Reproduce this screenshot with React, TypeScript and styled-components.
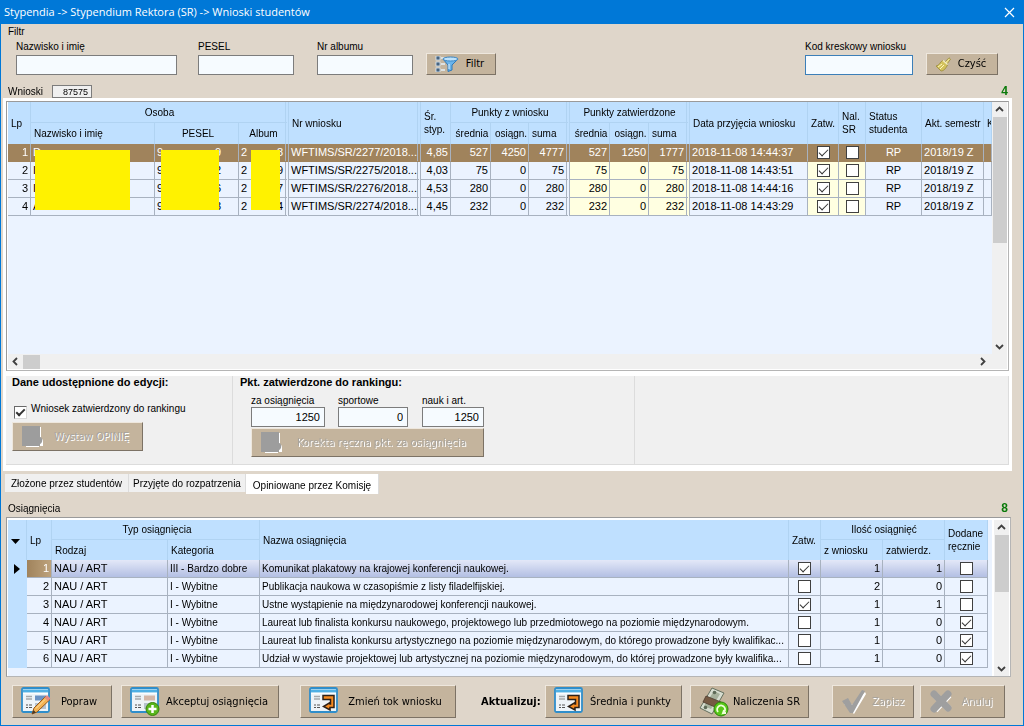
import React from 'react';
import styled, { createGlobalStyle, css } from 'styled-components';

const c = {
  title: '#0078d7',
  page: '#dfd6ca',
  button: '#c4b49d',
  head: '#bfe0ff',
  headLine: '#b0d3f2',
  row: '#ebf3ff',
  line: '#a8b2c0',
  picked: '#a0835c',
  cream: '#ffffe1',
  grey: '#f0f0f0',
  green: '#0a7a0a',
};

const Global = createGlobalStyle`
  *, *::before, *::after { box-sizing: border-box; }
  body { margin: 0; background: ${c.page}; }
  body, button, input { font: 10px/13px "Liberation Sans", Arial, sans-serif; color: #000; }
`;

const Window = styled.div`
  min-height: 100vh;
  display: flex;
  flex-direction: column;
  border: 1px solid ${c.title};
  border-top: 0;
  background: ${c.page};
`;

const TitleBar = styled.header`
  height: 24px;
  flex: none;
  display: flex;
  align-items: center;
  justify-content: space-between;
  padding: 0 8px 0 3px;
  background: ${c.title};
  color: #fff;
`;

const Title = styled.h1`
  margin: 0;
  font: 400 11px/16px "Open Sans", "Noto Sans", sans-serif;
`;

const CloseButton = styled.button`
  display: flex;
  padding: 0;
  border: 0;
  background: none;
`;

const FilterBox = styled.fieldset`
  min-width: 0;
  margin: 0;
  padding: 2px 25px 0 15px;
  border: 0;
`;

const Legend = styled.legend`
  margin-left: -8px;
  padding: 1px 0 0;
`;

const FilterRow = styled.div`
  display: flex;
  align-items: flex-end;
`;

const Field = styled.label<{ $width: number; $after?: number; $push?: boolean }>`
  display: flex;
  flex-direction: column;
  gap: 2px;
  width: ${(p) => p.$width}px;
  margin-right: ${(p) => p.$after ?? 0}px;
  ${(p) => p.$push && 'margin-left: auto;'}
  white-space: nowrap;
`;

const TextBox = styled.input<{ $active?: boolean; $number?: boolean }>`
  width: 100%;
  height: 20px;
  padding: 1px 4px 2px;
  border: 1px solid ${(p) => (p.$active ? '#3c7fb8' : '#7c7c7c')};
  border-radius: 0;
  background: #f6fbff;
  font-size: 11px;
  outline: none;
  ${(p) => p.$number && 'text-align: right;'}
`;

const Button = styled.button<{ $width: number; $height: number; $after?: number; $push?: boolean }>`
  flex: none;
  display: flex;
  align-items: center;
  width: ${(p) => p.$width}px;
  height: ${(p) => p.$height}px;
  margin-right: ${(p) => p.$after ?? 0}px;
  ${(p) => p.$push && 'margin-left: auto;'}
  padding: 0 4px 0 8px;
  border: 1px solid;
  border-color: #eee7dd #7c7265 #7c7265 #eee7dd;
  border-radius: 0;
  background: ${c.button};
  font: 400 11px/16px "DejaVu Sans Condensed", "DejaVu Sans", sans-serif;
  white-space: nowrap;
  &:disabled {
    color: #a8a49d;
    text-shadow: 1px 1px 0 #fff;
  }
  svg { flex: none; }
`;

const Caption = styled.span`
  flex: 1;
  text-align: center;
`;

const CountRow = styled.div<{ $top: number }>`
  display: flex;
  align-items: center;
  justify-content: space-between;
  height: 13px;
  margin: ${(p) => p.$top}px 15px 0 7px;
`;

const CountLabel = styled.label`
  display: flex;
  align-items: center;
  gap: 9px;
`;

const CodeBox = styled.input`
  width: 40px;
  height: 13px;
  padding: 0 3px;
  border: 1px solid #7c7c7c;
  background: ${c.grey};
  font-size: 9px;
  line-height: 11px;
  text-align: right;
`;

const Count = styled.strong`
  font-size: 12px;
  color: ${c.green};
`;

const Sheet = styled.main`
  flex: 1;
  display: flex;
  flex-direction: column;
  margin: 0 11px 0 2px;
  padding: 3px 3px 6px;
  background: #fff;
`;

const Frame = styled.div<{ $grow?: boolean }>`
  display: grid;
  grid-template-columns: minmax(0, 1fr) 15px;
  border: 1px solid #9a9a9a;
  border-color: #9a9a9a #b5b5b5 #b5b5b5 #9a9a9a;
  background: #fff;
  ${(p) =>
    p.$grow
      ? css`
          flex: 1;
          grid-template-rows: minmax(252px, 1fr) 15px;
          padding: 0 1px 1px;
        `
      : css`
          margin: 2px 12px 0 5px;
          padding: 2px 1px 0;
        `}
`;

const GridArea = styled.div<{ $pad?: boolean }>`
  overflow: hidden;
  background: ${c.row};
  ${(p) => p.$pad && 'margin-right: 2px; padding: 0 4px 8px 0;'}
`;

const Table = styled.table`
  width: 100%;
  table-layout: fixed;
  border-collapse: separate;
  border-spacing: 0;
`;

const Col = styled.col<{ $width?: number }>`
  width: ${(p) => (p.$width ? `${p.$width}px` : 'auto')};
`;

const Th = styled.th<{ $center?: boolean; $double?: boolean; $wrap?: boolean; $row?: number; $bare?: boolean }>`
  height: ${(p) => p.$row ?? 21}px;
  padding: 0 0 0 3px;
  overflow: hidden;
  background: ${c.head};
  border-right: ${(p) => (p.$double ? '4px double' : '1px solid')} ${c.headLine};
  border-bottom: ${(p) => (p.$bare ? '1px solid ' + c.headLine : '0')};
  font-weight: 400;
  text-align: ${(p) => (p.$center ? 'center' : 'left')};
  vertical-align: middle;
  white-space: ${(p) => (p.$wrap ? 'normal' : 'nowrap')};
`;

const Td = styled.td<{ $align?: 'right' | 'center'; $double?: boolean; $cream?: boolean; $mark?: boolean; $prose?: boolean; $tight?: boolean }>`
  position: relative;
  height: 18px;
  padding: 0 ${(p) => (p.$tight ? 0 : 2)}px 0 2px;
  overflow: hidden;
  text-overflow: ellipsis;
  white-space: nowrap;
  font-size: ${(p) => (p.$prose ? 10 : 11)}px;
  text-align: ${(p) => p.$align ?? 'left'};
  background: ${(p) => (p.$mark ? c.head : p.$cream ? c.cream : c.row)};
  border-right: ${(p) => (p.$double ? '4px double' : '1px solid')} ${c.line};
  border-bottom: 1px solid ${c.line};
  ${(p) => p.$mark && `border-color: ${c.head}; text-align: center; padding: 0;`}
  svg { display: block; margin: 0 auto; }
`;

const HiddenCell = styled(Td)`
  overflow: visible;
`;

const Row = styled.tr<{ $picked?: boolean; $current?: boolean }>`
  ${(p) =>
    p.$picked &&
    css`
      ${Td} {
        background: ${c.picked};
        border-bottom-color: ${c.picked};
        color: #fff;
      }
    `}
  ${(p) =>
    p.$current &&
    css`
      ${Td}:not(:first-child) {
        background: linear-gradient(#e3e8f8, #b3bfe3);
      }
      ${Td}:nth-child(2) {
        background: linear-gradient(90deg, #a0835c, #bda27c);
        color: #fff;
      }
    `}
`;

const Ends = styled.span<{ $inset?: number }>`
  display: flex;
  justify-content: space-between;
  padding-right: ${(p) => p.$inset ?? 0}px;
`;

const Mask = styled.span<{ $left: number; $right: number }>`
  position: absolute;
  z-index: 1;
  top: 6px;
  left: ${(p) => p.$left}px;
  right: ${(p) => p.$right}px;
  height: 60px;
  background: #fff200;
`;

const Tick = styled.input.attrs({ type: 'checkbox' })<{ $bold?: boolean }>`
  appearance: none;
  position: relative;
  display: block;
  flex: none;
  width: 13px;
  height: 13px;
  margin: 0 auto;
  border: 1px solid #404040;
  background: #fff;
  &:checked::after {
    content: '';
    position: absolute;
    top: 2px;
    left: 1px;
    width: 9px;
    height: 5px;
    border: solid #333;
    border-width: 0 0 ${(p) => (p.$bold ? '2px 2px' : '1px 1px')};
    transform: rotate(-45deg);
  }
`;

const VScroll = styled.div`
  display: flex;
  flex-direction: column;
  align-items: center;
  background: ${c.grey};
`;

const HScroll = styled.div`
  display: flex;
  align-items: center;
  background: ${c.grey};
`;

const Corner = styled.div`
  background: ${c.grey};
`;

const Arrow = styled.button<{ $end?: boolean }>`
  display: flex;
  align-items: center;
  justify-content: center;
  width: 15px;
  height: 15px;
  padding: 0;
  border: 0;
  background: none;
  ${(p) => p.$end && 'margin: auto 0 0;'}
`;

const SideArrow = styled(Arrow)`
  ${(p) => p.$end && 'margin: 0 2px 0 auto;'}
`;

const Thumb = styled.div<{ $w: number; $h: number }>`
  width: ${(p) => p.$w}px;
  height: ${(p) => p.$h}px;
  background: #cdcdcd;
`;

const Groups = styled.div`
  display: grid;
  grid-template-columns: 227px 402px 1fr;
  margin-top: 5px;
  background: ${c.grey};
  border-bottom: 1px solid #dcdcdc;
  min-height: 89px;
`;

const Group = styled.section<{ $left?: number }>`
  padding: 0 0 7px ${(p) => p.$left ?? 6}px;
  border-right: 1px solid #dcdcdc;
`;

const GroupTitle = styled.h2`
  margin: 0;
  font-size: 11px;
  line-height: 13px;
  white-space: nowrap;
`;

const TickLabel = styled.label`
  display: flex;
  gap: 4px;
  height: 17px;
  margin: 13px 0 3px 2px;
  ${Tick} {
    align-self: flex-end;
    margin: 0;
    border-color: #696969 #d8d8d8 #d8d8d8 #696969;
  }
`;

const Points = styled.div`
  display: flex;
  margin: 5px 0 1px 11px;
  ${Field} { gap: 0; }
`;

const Indent = styled.div`
  margin-left: 11px;
`;

const Tabs = styled.nav`
  display: flex;
  height: 20px;
  margin: 3px 0 0 4px;
`;

const Tab = styled.button<{ $on?: boolean; $width: number }>`
  width: ${(p) => p.$width}px;
  height: ${(p) => (p.$on ? 20 : 18)}px;
  padding: ${(p) => (p.$on ? '3px 0 0' : '0')};
  border: 0;
  border-right: 1px solid #dcdcdc;
  background: ${(p) => (p.$on ? '#fff' : c.grey)};
  white-space: nowrap;
`;

const Actions = styled.footer`
  display: flex;
  align-items: center;
  padding: 8px 18px 7px 11px;
`;

const UpdateLabel = styled.strong`
  flex: none;
  width: 64px;
  white-space: nowrap;
  font: 700 11px/16px "DejaVu Sans Condensed", "DejaVu Sans", sans-serif;
`;

const arrowPaths = { up: 'M1 6 4.500 2.500 8 6', down: 'M1 3 4.500 6.500 8 3', left: 'M6 1 2.500 4.500 6 8', right: 'M3 1 6.500 4.500 3 8' };

const Chevron = ({ to }: { to: keyof typeof arrowPaths }) => (
  <svg width="9" height="9" viewBox="0 0 9 9" fill="none" stroke="#404040" strokeWidth="1.800">
    <path d={arrowPaths[to]} />
  </svg>
);

const FunnelIcon = () => (
  <svg width="24" height="16" viewBox="0 0 24 16">
    {[0, 6, 12].map((y) => (
      <g key={y}>
        <rect x="1" y={y} width="4" height="4" fill="#46637f" stroke="#dcebf7" strokeWidth=".8" />
        <path d={`M6 ${y + 2}h4`} stroke="#e6f2fb" strokeWidth="1.500" />
      </g>
    ))}
    <path d="M8 3h15l-6 6v5l-4 1.500V9z" fill="#6bb4ea" stroke="#2f78b7" />
    <ellipse cx="15.500" cy="3" rx="7.500" ry="2" fill="#bfe2fa" stroke="#3b87c5" />
    <path d="M14 8v5" stroke="#e6f5ff" />
  </svg>
);

const BrushIcon = () => (
  <svg width="16" height="15" viewBox="0 0 16 15">
    <path d="M10 5 14 .8l1.500 1.400L12 7z" fill="#e9dc8a" stroke="#958634" strokeWidth=".8" />
    <path d="M1 9c3 0 4-4 6.500-5.500l5 4.500C11 11 9 14 6 14z" fill="#d3c25c" stroke="#9a8b3b" strokeWidth=".8" />
    <path d="m3 10 4-3M5 12l4-4" stroke="#fff7bd" />
    <path d="m8 3.500 4.500 4" stroke="#f5efc0" strokeWidth="1.500" />
  </svg>
);

const FormIcon = ({ kind }: { kind: 'edit' | 'add' | 'turn' }) => (
  <svg width="30" height="29" viewBox="0 0 30 29">
    <rect x="1" y="1" width="27" height="24" rx="1.500" fill="#eef4f8" stroke="#2f8ecb" strokeWidth="1.800" />
    <path d="M2 4h25" stroke="#4fb0e4" strokeWidth="3" />
    <path d="M2 6.300h25" stroke="#fff" />
    <path d="M5 9.500h6M5 12h6" stroke="#a4a8ab" strokeWidth="1.500" />
    <path d="M5 18h2M8 18h3M5 20.500h2M8 20.500h3" stroke="#555" />
    {kind !== 'turn' && <path d="M14 8.500h11v5H14z" fill={kind === 'edit' ? '#6b93c4' : '#d4b7a7'} />}
    {kind !== 'turn' && <path d="M14 16h11v6H14z" fill="#b7c3cf" />}
    {kind === 'edit' && (
      <g>
        <path d="m11 27 2-6L25 9l4 3.500L16 25z" fill="#f4b353" stroke="#94591d" />
        <path d="m23.500 10.500 2.500-2.500 3.500 3.500-2.500 2.500z" fill="#e28a86" />
        <path d="m11 27 1.500-4 2.500 2.500z" fill="#4b3928" />
        <path d="m15 21.500 9-9" stroke="#ffe2a0" />
      </g>
    )}
    {kind === 'add' && (
      <g>
        <circle cx="22.500" cy="22" r="6.500" fill="#58b61b" stroke="#39830c" />
        <path d="M22.500 18v8M18.500 22h8" stroke="#fff" strokeWidth="2.500" />
      </g>
    )}
    {kind === 'turn' && (
      <path
        d="M14 8.500h11v12h-4v2.500L14.500 19.500 21 15.500V17h.5v-4.500H14z"
        fill="#f78b20"
        stroke="#2d2119"
        strokeWidth="1.500"
      />
    )}
  </svg>
);

const MoneyIcon = () => (
  <svg width="30" height="30" viewBox="0 0 30 30">
    <path d="m1 21 12-20 12 5-12 21z" fill="#d7ddd0" stroke="#65705f" />
    <path d="m5 19 10-15 6 3-9 15z" fill="#a6b19c" />
    <path d="m7 9 15 6-3.500 6L4 15z" fill="#765a43" stroke="#4c3b2e" strokeWidth=".8" />
    <circle cx="15.500" cy="5.500" r="1.800" fill="#5d6a57" />
    <circle cx="6.500" cy="20.500" r="1.800" fill="#5d6a57" />
    <circle cx="22" cy="22" r="7" fill="#58c819" stroke="#2d850b" />
    <path d="M19 25a4 4 0 1 1 5 1l1-3M24 26l3 0" fill="none" stroke="#efffd9" strokeWidth="1.800" />
  </svg>
);

const CheckIcon = () => (
  <svg width="26" height="24" viewBox="0 0 26 24">
    <path d="m3 14 4-3 4 4L24 2l1 2-12 20z" fill="#fff" />
    <path d="m1 11 6-3 4 7L21 0l3 1-12 22H9z" fill="#9f9f9f" />
  </svg>
);

const CrossIcon = () => (
  <svg width="25" height="24" viewBox="0 0 25 24">
    <path d="m6 5 14 14M20 5 6 20" stroke="#fff" strokeWidth="6.500" />
    <path d="m5 4 14 14M19 4 5 19" stroke="#9f9f9f" strokeWidth="7" strokeLinecap="round" />
  </svg>
);

const BlockIcon = () => (
  <svg width="24" height="24" viewBox="0 0 24 24">
    <path d="M14 2h6v11l2 2v6h-4v1H5v-2h9z" fill="#fff" />
    <path d="M1 1h18v11c3 0 3 6 0 7v2H1z" fill="#9d9d9d" />
  </svg>
);

const applications = [
  { name: 'D', pesel: ['9', '9'], album: ['2', '8'], nr: 2277, avg: '4,85', asked: [527, 4250, 4777], given: [527, 1250, 1777], time: '14:44:37' },
  { name: 'I', pesel: ['9', '2'], album: ['2', '9'], nr: 2275, avg: '4,03', asked: [75, 0, 75], given: [75, 0, 75], time: '14:43:51' },
  { name: 'I', pesel: ['9', '6'], album: ['2', '7'], nr: 2276, avg: '4,53', asked: [280, 0, 280], given: [280, 0, 280], time: '14:44:16' },
  { name: 'A', pesel: ['9', '3'], album: ['2', '4'], nr: 2274, avg: '4,45', asked: [232, 0, 232], given: [232, 0, 232], time: '14:43:29' },
];

const achievements = [
  { level: 'III - Bardzo dobre', text: 'Komunikat plakatowy na krajowej konferencji naukowej.', ok: true, asked: 1, given: 1, manual: false },
  { level: 'I - Wybitne', text: 'Publikacja naukowa w czasopiśmie z listy filadelfijskiej.', ok: false, asked: 2, given: 0, manual: false },
  { level: 'I - Wybitne', text: 'Ustne wystąpienie na międzynarodowej konferencji naukowej.', ok: true, asked: 1, given: 1, manual: false },
  { level: 'I - Wybitne', text: 'Laureat lub finalista konkursu naukowego, projektowego lub przedmiotowego na poziomie międzynarodowym.', ok: false, asked: 1, given: 0, manual: true },
  { level: 'I - Wybitne', text: 'Laureat lub finalista konkursu artystycznego na poziomie międzynarodowym, do którego prowadzone były kwalifikac...', ok: false, asked: 1, given: 0, manual: true },
  { level: 'I - Wybitne', text: 'Udział w wystawie projektowej lub artystycznej na poziomie międzynarodowym, do której prowadzone były kwalifika...', ok: false, asked: 1, given: 0, manual: true },
];

const appCols = [23, 124, 84, 50, 132, 30, 40, 38, 41, 40, 39, 41, 118, 31, 27, 56, 62];
const achCols = [19, 25, 116, 92, undefined, 32, 62, 62, 43];

const ApplicationsTable = () => (
  <Table>
    <colgroup>
      {appCols.map((w, i) => (
        <Col key={i} $width={w} />
      ))}
      <Col />
    </colgroup>
    <thead>
      <tr>
        <Th rowSpan={2}>Lp</Th>
        <Th colSpan={3} $center $double $bare>Osoba</Th>
        <Th rowSpan={2} $double>Nr wniosku</Th>
        <Th rowSpan={2} $wrap>Śr. styp.</Th>
        <Th colSpan={3} $center $double $bare>Punkty z wniosku</Th>
        <Th colSpan={3} $center $double $bare>Punkty zatwierdzone</Th>
        <Th rowSpan={2}>Data przyjęcia wniosku</Th>
        <Th rowSpan={2}>Zatw.</Th>
        <Th rowSpan={2} $wrap>Nal. SR</Th>
        <Th rowSpan={2} $wrap>Status studenta</Th>
        <Th rowSpan={2}>Akt. semestr</Th>
        <Th rowSpan={2}>K</Th>
      </tr>
      <tr>
        <Th>Nazwisko i imię</Th>
        <Th $center>PESEL</Th>
        <Th $center $double>Album</Th>
        <Th $center>średnia</Th>
        <Th $center>osiągn.</Th>
        <Th $double>suma</Th>
        <Th $center>średnia</Th>
        <Th $center>osiągn.</Th>
        <Th $double>suma</Th>
      </tr>
    </thead>
    <tbody>
      {applications.map((a, i) => (
        <Row key={a.nr} $picked={i === 0}>
          <Td $align="right">{i + 1}</Td>
          <HiddenCell>{a.name}{i === 0 && <Mask $left={4} $right={24} />}</HiddenCell>
          <HiddenCell><Ends $inset={15}><span>{a.pesel[0]}</span><span>{a.pesel[1]}</span></Ends>{i === 0 && <Mask $left={6} $right={19} />}</HiddenCell>
          <HiddenCell $double><Ends><span>{a.album[0]}</span><span>{a.album[1]}</span></Ends>{i === 0 && <Mask $left={12} $right={5} />}</HiddenCell>
          <Td $double $tight>WFTIMS/SR/{a.nr}/2018...</Td>
          <Td $align="right">{a.avg}</Td>
          {a.asked.map((n, k) => (
            <Td key={k} $align="right" $double={k === 2}>{n}</Td>
          ))}
          {a.given.map((n, k) => (
            <Td key={k} $align="right" $cream $double={k === 2}>{n}</Td>
          ))}
          <Td>2018-11-08 {a.time}</Td>
          <Td $cream><Tick defaultChecked aria-label="Zatw." /></Td>
          <Td $cream><Tick aria-label="Nal. SR" /></Td>
          <Td $align="center">RP</Td>
          <Td>2018/19 Z</Td>
          <Td />
        </Row>
      ))}
    </tbody>
  </Table>
);

const AchievementsTable = () => (
  <Table>
    <colgroup>
      {achCols.map((w, i) => (
        <Col key={i} $width={w} />
      ))}
    </colgroup>
    <thead>
      <tr>
        <Th rowSpan={2} $row={20}>
          <svg width="9" height="5" viewBox="0 0 9 5"><path d="M0 0h9L4.500 5z" /></svg>
        </Th>
        <Th rowSpan={2}>Lp</Th>
        <Th colSpan={2} $row={20} $center $bare>Typ osiągnięcia</Th>
        <Th rowSpan={2}>Nazwa osiągnięcia</Th>
        <Th rowSpan={2}>Zatw.</Th>
        <Th colSpan={2} $row={20} $center $bare>Ilość osiągnięć</Th>
        <Th rowSpan={2} $wrap>Dodane ręcznie</Th>
      </tr>
      <tr>
        <Th $row={20}>Rodzaj</Th>
        <Th $row={20}>Kategoria</Th>
        <Th $row={20}>z wniosku</Th>
        <Th $row={20}>zatwierdz.</Th>
      </tr>
    </thead>
    <tbody>
      {achievements.map((a, i) => (
        <Row key={i} $current={i === 0}>
          <Td $mark>
            {i === 0 && <svg width="6" height="10" viewBox="0 0 6 10"><path d="M0 0v10l6-5z" /></svg>}
          </Td>
          <Td $align="right">{i + 1}</Td>
          <Td>NAU / ART</Td>
          <Td $prose>{a.level}</Td>
          <Td $prose>{a.text}</Td>
          <Td><Tick defaultChecked={a.ok} aria-label="Zatw." /></Td>
          <Td $align="right">{a.asked}</Td>
          <Td $align="right">{a.given}</Td>
          <Td><Tick defaultChecked={a.manual} aria-label="Dodane ręcznie" /></Td>
        </Row>
      ))}
    </tbody>
  </Table>
);

const VerticalBar = ({ thumb }: { thumb: number }) => (
  <VScroll>
    <Arrow aria-label="W górę"><Chevron to="up" /></Arrow>
    <Thumb $w={14} $h={thumb} />
    <Arrow $end aria-label="W dół"><Chevron to="down" /></Arrow>
  </VScroll>
);

export default function App() {
  return (
    <Window>
      <Global />
      <TitleBar>
        <Title>Stypendia -&gt; Stypendium Rektora (SR) -&gt; Wnioski studentów</Title>
        <CloseButton aria-label="Zamknij">
          <svg width="11" height="11" viewBox="0 0 11 11" stroke="#fff" strokeWidth="1.200"><path d="m1 1 9 9M10 1 1 10" /></svg>
        </CloseButton>
      </TitleBar>

      <FilterBox>
        <Legend>Filtr</Legend>
        <FilterRow>
          <Field $width={161} $after={21}>Nazwisko i imię<TextBox /></Field>
          <Field $width={96} $after={23}>PESEL<TextBox /></Field>
          <Field $width={96} $after={13}>Nr albumu<TextBox /></Field>
          <Button $width={70} $height={22}><FunnelIcon /><Caption>Filtr</Caption></Button>
          <Field $width={108} $after={13} $push>Kod kreskowy wniosku<TextBox $active autoFocus /></Field>
          <Button $width={72} $height={22}><BrushIcon /><Caption>Czyść</Caption></Button>
        </FilterRow>
      </FilterBox>

      <CountRow $top={10}>
        <CountLabel>Wnioski<CodeBox defaultValue="87575" /></CountLabel>
        <Count>4</Count>
      </CountRow>

      <Sheet>
        <Frame $grow>
          <GridArea><ApplicationsTable /></GridArea>
          <VerticalBar thumb={126} />
          <HScroll>
            <SideArrow aria-label="W lewo"><Chevron to="left" /></SideArrow>
            <Thumb $w={17} $h={14} />
            <SideArrow $end aria-label="W prawo"><Chevron to="right" /></SideArrow>
          </HScroll>
          <Corner />
        </Frame>

        <Groups>
          <Group>
            <GroupTitle>Dane udostępnione do edycji:</GroupTitle>
            <TickLabel><Tick defaultChecked $bold />Wniosek zatwierdzony do rankingu</TickLabel>
            <Button $width={131} $height={29} disabled><BlockIcon /><Caption>Wystaw OPINIĘ</Caption></Button>
          </Group>
          <Group $left={7}>
            <GroupTitle>Pkt. zatwierdzone do rankingu:</GroupTitle>
            <Points>
              <Field $width={74} $after={13}>za osiągnięcia<TextBox $number defaultValue="1250" /></Field>
              <Field $width={70} $after={14}>sportowe<TextBox $number defaultValue="0" /></Field>
              <Field $width={62}>nauk i art.<TextBox $number defaultValue="1250" /></Field>
            </Points>
            <Indent>
              <Button $width={233} $height={29} disabled><BlockIcon /><Caption>Korekta ręczna pkt. za osiągnięcia</Caption></Button>
            </Indent>
          </Group>
          <Group />
        </Groups>
      </Sheet>

      <Tabs>
        <Tab $width={124}>Złożone przez studentów</Tab>
        <Tab $width={117}>Przyjęte do rozpatrzenia</Tab>
        <Tab $width={133} $on>Opiniowane przez Komisję</Tab>
      </Tabs>

      <CountRow $top={8}>
        <span>Osiągnięcia</span>
        <Count>8</Count>
      </CountRow>
      <Frame>
        <GridArea $pad><AchievementsTable /></GridArea>
        <VerticalBar thumb={57} />
      </Frame>

      <Actions>
        <Button $width={100} $height={33} $after={9}><FormIcon kind="edit" /><Caption>Popraw</Caption></Button>
        <Button $width={158} $height={33} $after={21}><FormIcon kind="add" /><Caption>Akceptuj osiągnięcia</Caption></Button>
        <Button $width={156} $height={33} $after={25}><FormIcon kind="turn" /><Caption>Zmień tok wniosku</Caption></Button>
        <UpdateLabel>Aktualizuj:</UpdateLabel>
        <Button $width={137} $height={33} $after={8}><FormIcon kind="turn" /><Caption>Średnia i punkty</Caption></Button>
        <Button $width={119} $height={33} $after={8}><MoneyIcon /><Caption>Naliczenia SR</Caption></Button>
        <Button $width={82} $height={33} $after={6} $push disabled><CheckIcon /><Caption>Zapisz</Caption></Button>
        <Button $width={85} $height={33} disabled><CrossIcon /><Caption>Anuluj</Caption></Button>
      </Actions>
    </Window>
  );
}
